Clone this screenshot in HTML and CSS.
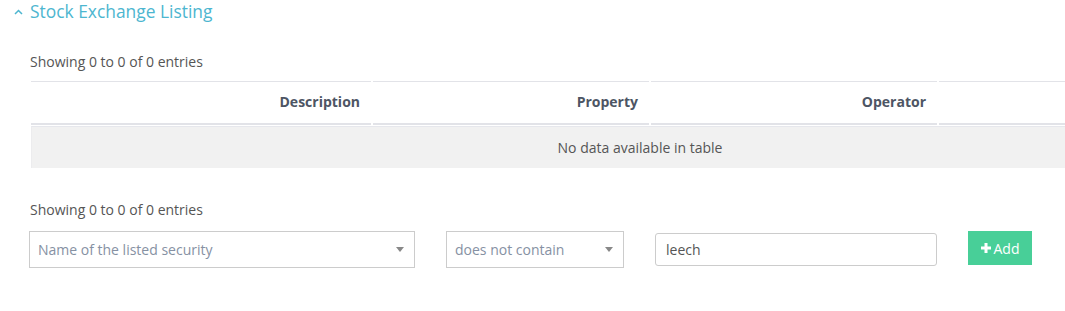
FILE: index.html
```html
<!DOCTYPE html>
<html lang="en-us">
  <head>
    <meta charset="utf-8">
    <title>Stock Exchange Listing</title>
    <link rel="stylesheet" href="styles.css">
  </head>
  <body>
    <div class="panel">
      <div class="panel-heading">
        <svg class="chevron" width="9" height="6" viewBox="0 0 9 6"><polyline points="1,5 4.5,1.5 8,5" fill="none" stroke="#4db6d0" stroke-width="1.5"/></svg>
        <span class="panel-title">Stock Exchange Listing</span>
      </div>
      <div class="panel-body">
        <div class="info">Showing 0 to 0 of 0 entries</div>
        <div class="table-wrap">
          <table class="grid">
            <thead>
              <tr>
                <th class="col-desc">Description</th>
                <th class="col-prop">Property</th>
                <th class="col-op">Operator</th>
                <th class="col-val"></th>
              </tr>
            </thead>
            <tbody>
              <tr>
                <td colspan="4" class="empty">No data available in table</td>
              </tr>
            </tbody>
          </table>
        </div>
        <div class="info info-bottom">Showing 0 to 0 of 0 entries</div>
        <div class="filter-row">
          <div class="select select-field">
            <span class="placeholder">Name of the listed security</span>
            <span class="caret"></span>
          </div>
          <div class="select select-op">
            <span class="placeholder">does not contain</span>
            <span class="caret"></span>
          </div>
          <input class="value-input" type="text" value="leech">
          <div class="button-add">
            <svg class="plus" width="10" height="10" viewBox="0 0 10 10"><path d="M3.5 0h3v3.5h3.5v3h-3.5v3.5h-3v-3.5h-3.5v-3h3.5z" fill="#fff"/></svg>
            <span>Add</span>
          </div>
        </div>
      </div>
    </div>
  </body>
</html>
```

FILE: styles.css
```css
* {
    margin: 0;
    padding: 0;
    box-sizing: border-box;
}
body {
    background: #fff;
    font-family: "Open Sans", "Liberation Sans", sans-serif;
    font-size: 14px;
    color: #555;
    overflow: hidden;
}
.panel-heading {
    display: flex;
    align-items: center;
    height: 22px;
    padding-left: 14px;
}
.chevron {
    margin-right: 7px;
    margin-top: 1px;
}
.panel-title {
    font-size: 17.4px;
    color: #4db6d0;
    line-height: 22px;
}
.panel-body {
    padding-left: 29px;
}
.info {
    margin-left: 1px;
    margin-top: 30px;
    line-height: 20px;
    color: #555;
}
.info-bottom {
    margin-top: 31px;
}
.table-wrap {
    overflow: hidden;
    margin-top: 8px;
}
table.grid {
    border-collapse: separate;
    border-spacing: 2px 1px;
    width: 1221px;
}
table.grid th {
    border-top: 1px solid #e2e3e8;
    border-bottom: 2px solid #e2e3e8;
    padding: 10px 11px 11px 11px;
    line-height: 20px;
    text-align: right;
    font-weight: bold;
    color: #4d5564;
}
.col-desc { width: 340px; }
.col-prop { width: 276px; }
.col-op { width: 286px; }
td.empty {
    background: #f1f1f1;
    border-top: 1px solid #e6e7ec;
    border-left: 1px solid #ececee;
    height: 42px;
    padding: 0;
    text-align: center;
    line-height: 20px;
    color: #555;
}
.filter-row {
    display: flex;
    align-items: center;
    margin-top: 11px;
}
.select {
    display: flex;
    align-items: center;
    justify-content: space-between;
    height: 37px;
    border: 1px solid #ccc;
    padding: 0 8px 0 8px;
    font-size: 14px;
}
.select-field { width: 386px; }
.select-op { width: 178px; margin-left: 31px; }
.placeholder {
    color: #8691a3;
}
.caret {
    width: 0;
    height: 0;
    border-left: 4px solid transparent;
    border-right: 4px solid transparent;
    border-top: 5px solid #888;
    margin-right: 2px;
}
.value-input {
    width: 282px;
    height: 33px;
    margin-left: 31px;
    border: 1px solid #ccc;
    border-radius: 3px;
    padding: 0 10px;
    font-family: "Open Sans", "Liberation Sans", sans-serif;
    font-size: 14px;
    color: #555;
    outline: none;
}
.button-add {
    display: flex;
    align-items: center;
    justify-content: center;
    align-self: flex-start;
    width: 64px;
    height: 34px;
    margin-left: 31px;
    background: #48cf98;
    color: #fff;
    font-size: 14px;
}
.plus {
    margin-right: 3px;
}
```
